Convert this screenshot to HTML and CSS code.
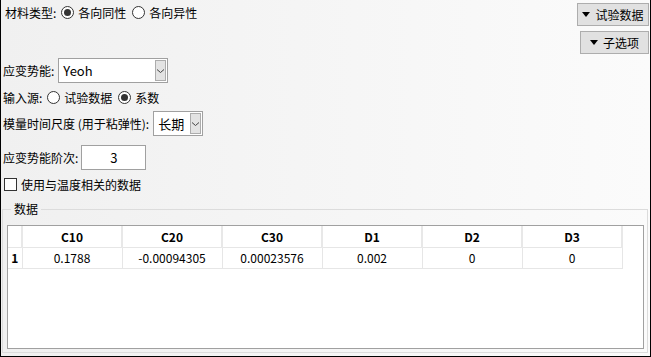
FILE: index.html
```html
<!DOCTYPE html>
<html lang="zh-CN">
<head>
    <meta charset="UTF-8">
    <meta name="viewport" content="width=device-width, initial-scale=1.0">
    <title>材料参数</title>
    <link rel="stylesheet" href="styles.css">
</head>
<body>
<div class="panel">
    <div class="top">
        <div class="row row-first">
            <span class="label">材料类型:</span>
            <span class="radio checked"></span><span class="opt">各向同性</span>
            <span class="radio"></span><span class="opt">各向异性</span>
        </div>
        <div class="tools">
            <button class="tool tool-wide"><span class="tri"></span>试验数据</button>
            <button class="tool"><span class="tri"></span>子选项</button>
        </div>
    </div>

    <div class="row row-combo">
        <span class="label">应变势能:</span>
        <div class="combo combo-model">
            <span class="combo-text">Yeoh</span>
            <span class="combo-btn"><svg width="9" height="6" viewBox="0 0 9 6"><path d="M1 1.5 L4.5 4.5 L8 1.5" fill="none" stroke="#444" stroke-width="1"/></svg></span>
        </div>
    </div>

    <div class="row row-source">
        <span class="label">输入源:</span>
        <span class="radio"></span><span class="opt">试验数据</span>
        <span class="radio checked"></span><span class="opt">系数</span>
    </div>

    <div class="row row-scale">
        <span class="label">模量时间尺度 (用于粘弹性):</span>
        <div class="combo combo-time">
            <span class="combo-text">长期</span>
            <span class="combo-btn"><svg width="9" height="6" viewBox="0 0 9 6"><path d="M1 1.5 L4.5 4.5 L8 1.5" fill="none" stroke="#444" stroke-width="1"/></svg></span>
        </div>
    </div>

    <div class="row row-order">
        <span class="label">应变势能阶次:</span>
        <div class="spin">3</div>
    </div>

    <div class="row row-check">
        <span class="check"></span><span class="opt">使用与温度相关的数据</span>
    </div>

    <fieldset class="group">
        <legend>数据</legend>
        <div class="table-box">
            <table class="grid">
                <thead>
                    <tr>
                        <th class="corner"></th>
                        <th>C10</th>
                        <th>C20</th>
                        <th>C30</th>
                        <th>D1</th>
                        <th>D2</th>
                        <th>D3</th>
                    </tr>
                </thead>
                <tbody>
                    <tr>
                        <th class="rownum">1</th>
                        <td>0.1788</td>
                        <td>-0.00094305</td>
                        <td>0.00023576</td>
                        <td>0.002</td>
                        <td>0</td>
                        <td>0</td>
                    </tr>
                </tbody>
            </table>
        </div>
    </fieldset>
</div>
</body>
</html>
```

FILE: styles.css
```css
* {
    box-sizing: border-box;
}

body {
    margin: 0;
    font-family: "Noto Sans CJK SC", "Noto Sans", sans-serif;
    font-size: 12px;
    color: #000;
}

.panel {
    width: 651px;
    height: 357px;
    border: 1px solid #000;
    border-top: none;
    background: linear-gradient(to right, #f0f0f0, #fbfbfb);
    display: flex;
    flex-direction: column;
    overflow: hidden;
}

.top {
    display: flex;
    justify-content: space-between;
    align-items: flex-start;
    padding: 3px 1px 0 2px;
}

.row {
    display: flex;
    align-items: center;
    height: 20px;
    white-space: nowrap;
    padding-left: 2px;
}

.row-first {
    margin-top: -1px;
}

.label {
    margin-right: 3px;
}

.radio {
    width: 13px;
    height: 13px;
    border: 1px solid #333;
    border-radius: 50%;
    background: #fff;
    display: inline-flex;
    align-items: center;
    justify-content: center;
    margin: 0 4px 0 2px;
}

.radio.checked::after {
    content: "";
    width: 7px;
    height: 7px;
    border-radius: 50%;
    background: #333;
}

.opt {
    margin-right: 4px;
}

.tools {
    display: flex;
    flex-direction: column;
    align-items: flex-end;
    gap: 5px;
}

.tool {
    font-family: inherit;
    font-size: 12px;
    height: 23px;
    width: 69px;
    border: 1px solid #adadad;
    background: #e1e1e1;
    display: flex;
    align-items: center;
    justify-content: center;
    padding: 0;
    color: #000;
}

.tool-wide {
    width: 72px;
}

.tri {
    width: 0;
    height: 0;
    border-left: 4px solid transparent;
    border-right: 4px solid transparent;
    border-top: 5px solid #000;
    margin-right: 5px;
}

.row-combo {
    height: 25px;
    margin-top: 4px;
}

.combo {
    height: 25px;
    border: 1px solid #a0a0a0;
    background: #fff;
    display: flex;
    align-items: center;
    justify-content: space-between;
    padding: 1px 1px 1px 4px;
}

.combo-model {
    width: 110px;
    margin-left: 1px;
}

.combo-time {
    width: 50px;
    margin-left: 1px;
}

.combo-text {
    font-size: 13px;
}

.combo-btn {
    width: 11px;
    height: 21px;
    border: 1px solid #acacac;
    background: #e3e3e3;
    display: flex;
    align-items: center;
    justify-content: center;
}

.row-source {
    margin-top: 4px;
}

.row-scale {
    height: 25px;
    margin-top: 4px;
}

.row-order {
    height: 25px;
    margin-top: 9px;
}

.spin {
    width: 65px;
    height: 25px;
    border: 1px solid #a0a0a0;
    background: #fff;
    display: flex;
    align-items: center;
    justify-content: center;
    font-size: 13px;
}

.row-check {
    margin-top: 4px;
}

.check {
    width: 13px;
    height: 13px;
    border: 1px solid #333;
    background: #fff;
    margin: 0 4px 0 1px;
}

.group {
    margin: 8px 2px 3px 1px;
    padding: 9px 3px 3px 4px;
    border: 1px solid #dcdcdc;
    flex: 1;
    min-height: 0;
    display: flex;
}

.group legend {
    padding: 0 3px;
    margin-left: 4px;
    line-height: 14px;
}

.table-box {
    flex: 1;
    border: 1px solid #a0a0a0;
    background: #fff;
}

.grid {
    border-collapse: collapse;
    font-size: 12px;
}

.grid th,
.grid td {
    width: 100px;
    height: 21px;
    padding: 0;
    text-align: center;
    border-right: 1px solid #e6e6e6;
    border-bottom: 1px solid #e6e6e6;
}

.grid thead th {
    font-weight: bold;
    border-right: 2px solid #e8e8e8;
}

.grid .corner,
.grid .rownum {
    width: 14px;
    font-weight: bold;
}
```
